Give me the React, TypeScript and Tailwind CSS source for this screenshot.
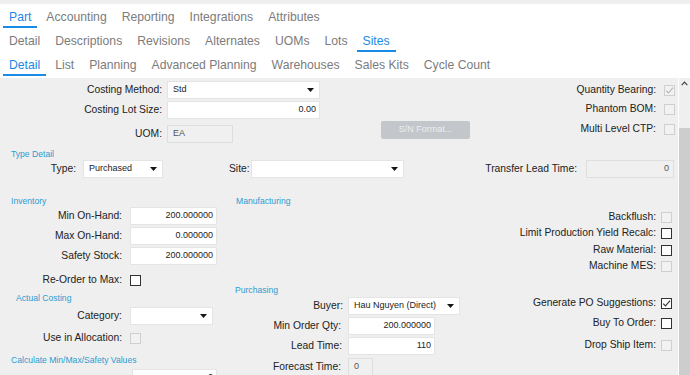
import React from 'react';

const tabs1 = ['Part', 'Accounting', 'Reporting', 'Integrations', 'Attributes'];
const tabs2 = ['Detail', 'Descriptions', 'Revisions', 'Alternates', 'UOMs', 'Lots', 'Sites'];
const tabs3 = ['Detail', 'List', 'Planning', 'Advanced Planning', 'Warehouses', 'Sales Kits', 'Cycle Count'];

function TabRow({ items, active }: { items: string[]; active: string }) {
  return (
    <div className="flex h-[24px] pl-[3px] gap-[3px]">
      {items.map((t) => (
        <div
          key={t}
          className={`h-full px-[6px] pt-[5px] flex items-center border-b-2 text-[12.2px] ${
            t === active ? 'border-[#1a8ae5] text-[#1a8ae5]' : 'border-transparent text-[#7c7c7c]'
          }`}
        >
          {t}
        </div>
      ))}
    </div>
  );
}

function Arrow() {
  return (
    <svg width="7" height="4" viewBox="0 0 7 4" className="shrink-0">
      <path d="M0 0h7L3.5 4z" fill="#151515" />
    </svg>
  );
}

function Select({ value, className }: { value?: string; className: string }) {
  return (
    <div className={`h-[18px] bg-white border border-[#e4e4e4] flex items-center pl-[5px] pr-[5px] text-[9px] text-[#222] ${className}`}>
      <span className="flex-1 truncate">{value}</span>
      <Arrow />
    </div>
  );
}

function Input({ value, className, disabled }: { value: string; className: string; disabled?: boolean }) {
  return (
    <div
      className={`h-[18px] border flex items-center text-[9px] ${
        disabled ? 'bg-[#f0f0f0] border-[#dedede] text-[#555]' : 'bg-white border-[#e4e4e4] text-[#222] justify-end pr-[3px]'
      } ${className}`}
    >
      {value}
    </div>
  );
}

function Check({ checked, disabled }: { checked?: boolean; disabled?: boolean }) {
  return (
    <span
      className={`w-[11px] h-[11px] shrink-0 border flex items-center justify-center ${
        disabled ? 'border-[#cfcfcf] bg-[#f2f2f2]' : 'border-[#333] bg-white'
      }`}
    >
      {checked && (
        <svg width="9" height="9" viewBox="0 0 9 9">
          <path d="M1.2 4.6l2.3 2.3L8 1.6" fill="none" stroke={disabled ? '#b5b5b5' : '#333'} strokeWidth="1.1" />
        </svg>
      )}
    </span>
  );
}

function Heading({ children, className }: { children: React.ReactNode; className: string }) {
  return <div className={`h-[10px] leading-[10px] text-[8.6px] text-[#2d9bd0] ${className}`}>{children}</div>;
}

function CheckRow({ label, checked, disabled, gap, className }: { label: string; checked?: boolean; disabled?: boolean; gap: string; className: string }) {
  return (
    <div className={`flex items-center justify-end ${className}`}>
      <span className={gap}>{label}</span>
      <Check checked={checked} disabled={disabled} />
    </div>
  );
}

export default function App() {
  return (
    <div className="w-[690px] h-[375px] overflow-hidden bg-[#efefef] font-['Liberation_Sans',Arial,sans-serif] pt-[4px]">
      <div className="bg-white h-[74px]">
        <TabRow items={tabs1} active="Part" />
        <TabRow items={tabs2} active="Sites" />
        <TabRow items={tabs3} active="Detail" />
      </div>

      <div className="flex h-[297px] text-[10.3px] text-[#222]">
        <div className="w-[678px]">
          {/* top block */}
          <div className="flex h-[67px]">
            <div className="w-[320px] pt-[3px]">
              <div className="flex items-center h-[18px]">
                <span className="w-[162px] text-right">Costing Method:</span>
                <Select value="Std" className="ml-[5px] w-[153px]" />
              </div>
              <div className="flex items-center h-[18px] mt-[2px]">
                <span className="w-[162px] text-right">Costing Lot Size:</span>
                <Input value="0.00" className="ml-[5px] w-[153px]" />
              </div>
              <div className="flex items-center h-[18px] mt-[6px]">
                <span className="w-[162px] text-right">UOM:</span>
                <Input value="EA" disabled className="ml-[5px] w-[66px] pl-[5px]" />
              </div>
            </div>
            <div className="ml-[61px] mt-[43px] w-[89px] h-[18px] rounded-[2px] bg-[#c3c7cb] text-[#eceef0] text-[9px] flex items-center justify-center">
              S/N Format...
            </div>
            <div className="flex-1 pr-[3px] pt-[3px]">
              <CheckRow label="Quantity Bearing:" checked disabled gap="mr-[8px]" className="h-[18px]" />
              <CheckRow label="Phantom BOM:" disabled gap="mr-[8px]" className="h-[18px] mt-[1px]" />
              <CheckRow label="Multi Level CTP:" disabled gap="mr-[8px]" className="h-[18px] mt-[2px]" />
            </div>
          </div>

          {/* type detail */}
          <Heading className="mt-[4px] pl-[11px]">Type Detail</Heading>
          <div className="flex items-center h-[18px] mt-[1px]">
            <span className="w-[76px] text-right">Type:</span>
            <Select value="Purchased" className="ml-[7px] w-[80px]" />
            <span className="ml-[66px]">Site:</span>
            <Select className="ml-[1px] w-[153px]" />
            <div className="flex-1 flex items-center justify-end pr-[4px]">
              <span className="mr-[9px]">Transfer Lead Time:</span>
              <Input value="0" disabled className="w-[88px] justify-end pr-[4px]" />
            </div>
          </div>

          {/* lower block */}
          <div className="flex mt-[18px]">
            <div className="w-[225px]">
              <Heading className="pl-[11px]">Inventory</Heading>
              <div className="flex items-center h-[18px] mt-[1px]">
                <span className="w-[122px] text-right">Min On-Hand:</span>
                <Input value="200.000000" className="ml-[8px] w-[87px]" />
              </div>
              <div className="flex items-center h-[18px] mt-[2px]">
                <span className="w-[122px] text-right">Max On-Hand:</span>
                <Input value="0.000000" className="ml-[8px] w-[87px]" />
              </div>
              <div className="flex items-center h-[18px] mt-[2px]">
                <span className="w-[122px] text-right">Safety Stock:</span>
                <Input value="200.000000" className="ml-[8px] w-[87px]" />
              </div>
              <div className="flex items-center h-[18px] mt-[6px]">
                <span className="w-[122px] text-right mr-[8px]">Re-Order to Max:</span>
                <Check />
              </div>
              <Heading className="mt-[4px] pl-[16px]">Actual Costing</Heading>
              <div className="flex items-center h-[18px] mt-[4px]">
                <span className="w-[122px] text-right">Category:</span>
                <Select className="ml-[8px] w-[83px]" />
              </div>
              <div className="flex items-center h-[18px] mt-[4px]">
                <span className="w-[122px] text-right mr-[8px]">Use in Allocation:</span>
                <Check disabled />
              </div>
              <Heading className="mt-[8px] pl-[11px]">Calculate Min/Max/Safety Values</Heading>
              <div className="flex items-center h-[18px] mt-[4px]">
                <span className="w-[122px]" />
                <Input value="0" className="ml-[10px] w-[85px]" />
              </div>
            </div>

            <div className="w-[235px]">
              <Heading className="pl-[11px]">Manufacturing</Heading>
              <Heading className="mt-[79px] pl-[10px]">Purchasing</Heading>
              <div className="flex items-center h-[18px] mt-[2px]">
                <span className="w-[118px] text-right">Buyer:</span>
                <Select value="Hau Nguyen (Direct)" className="ml-[5px] w-[112px]" />
              </div>
              <div className="flex items-center h-[18px] mt-[2px]">
                <span className="w-[116px] text-right">Min Order Qty:</span>
                <Input value="200.000000" className="ml-[7px] w-[87px]" />
              </div>
              <div className="flex items-center h-[18px] mt-[2px]">
                <span className="w-[117px] text-right">Lead Time:</span>
                <Input value="110" className="ml-[6px] w-[87px]" />
              </div>
              <div className="flex items-center h-[18px] mt-[3px]">
                <span className="w-[116px] text-right">Forecast Time:</span>
                <Input value="0" disabled className="ml-[7px] w-[25px] pl-[5px]" />
              </div>
            </div>

            <div className="flex-1 pr-[6px] pt-[13px]">
              <CheckRow label="Backflush:" disabled gap="mr-[5px]" className="h-[16px]" />
              <CheckRow label="Limit Production Yield Recalc:" gap="mr-[5px]" className="h-[16px]" />
              <CheckRow label="Raw Material:" gap="mr-[5px]" className="h-[16px] mt-[1px]" />
              <CheckRow label="Machine MES:" disabled gap="mr-[5px]" className="h-[16px]" />
              <CheckRow label="Generate PO Suggestions:" checked gap="mr-[5px]" className="h-[16px] mt-[21px]" />
              <CheckRow label="Buy To Order:" gap="mr-[5px]" className="h-[16px] mt-[4px]" />
              <CheckRow label="Drop Ship Item:" disabled gap="mr-[5px]" className="h-[16px] mt-[6px]" />
            </div>
          </div>
        </div>

        {/* scrollbar */}
        <div className="w-[12px] border-l border-white flex flex-col">
          <div className="h-[50px] flex justify-center pt-[3px]">
            <svg width="7" height="5" viewBox="0 0 7 5">
              <path d="M0.7 4.2L3.5 1.2l2.8 3" fill="none" stroke="#444" strokeWidth="1.2" />
            </svg>
          </div>
          <div className="flex-1 bg-[#cdcdcd]" />
        </div>
      </div>
    </div>
  );
}
